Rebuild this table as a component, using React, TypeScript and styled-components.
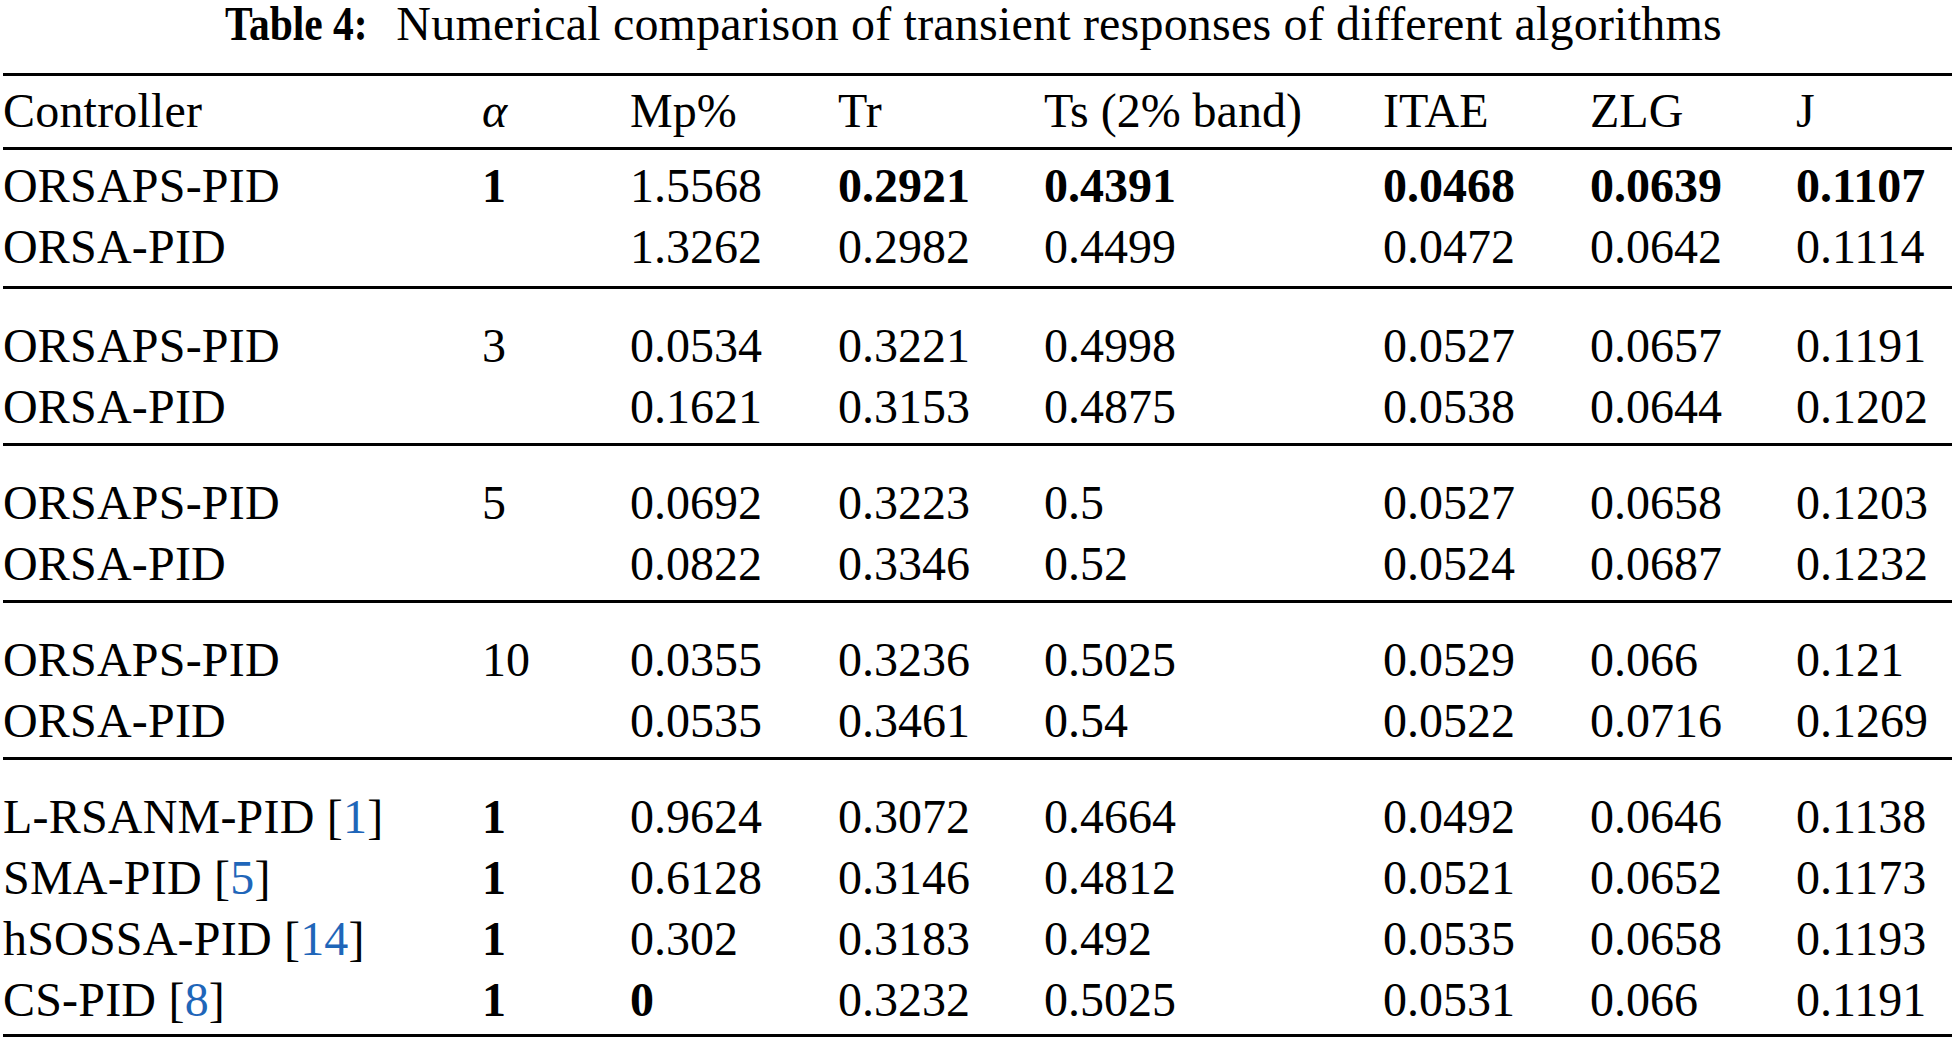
import React from "react";
import styled, { createGlobalStyle } from "styled-components";

const GlobalStyle = createGlobalStyle`
  html, body {
    margin: 0;
    padding: 0;
    background: #fff;
  }
  body {
    font-family: "Liberation Serif", "Times New Roman", serif;
    color: #000;
  }
`;

const Page = styled.div`
  width: 1954px;
  padding: 0 2px 0 3px;
  box-sizing: border-box;
`;

const Caption = styled.div`
  font-size: 48px;
  line-height: 48px;
  text-align: center;
  white-space: nowrap;
  letter-spacing: 0.2px;
  margin-bottom: 25px;
  padding-right: 8px;
`;

const CaptionLabel = styled.span`
  display: inline-block;
  font-weight: 700;
  letter-spacing: 0;
  transform: scaleX(0.865);
  transform-origin: left center;
  margin-right: -6px;
`;

const Table = styled.div`
  border-top: 3px solid #000;
  border-bottom: 3px solid #000;
`;

const Group = styled.div<{ $top: number; $bottom: number; $ruled?: boolean }>`
  padding-top: ${({ $top }) => $top}px;
  padding-bottom: ${({ $bottom }) => $bottom}px;
  border-top: ${({ $ruled }) => ($ruled ? "3px solid #000" : "none")};
`;

const Row = styled.div`
  display: grid;
  grid-template-columns: 479px 148px 208px 206px 339px 207px 206px 1fr;
  font-size: 48px;
  line-height: 61px;
  height: 61px;
  white-space: nowrap;
`;

const Cell = styled.div<{ $bold?: boolean }>`
  font-weight: ${({ $bold }) => ($bold ? 700 : 400)};
`;

const NameCell = styled.div`
  letter-spacing: 0.2px;
`;

const Alpha = styled.span`
  font-style: italic;
`;

const Cite = styled.span`
  color: #1f66b9;
`;

type Val = { v: string; b?: boolean };
type Line = { name: string; cite?: string; cells: Val[] };

const n = (v: string): Val => ({ v });
const b = (v: string): Val => ({ v, b: true });

const groups: Line[][] = [
  [
    {
      name: "ORSAPS-PID",
      cells: [b("1"), n("1.5568"), b("0.2921"), b("0.4391"), b("0.0468"), b("0.0639"), b("0.1107")],
    },
    {
      name: "ORSA-PID",
      cells: [n(""), n("1.3262"), n("0.2982"), n("0.4499"), n("0.0472"), n("0.0642"), n("0.1114")],
    },
  ],
  [
    {
      name: "ORSAPS-PID",
      cells: [n("3"), n("0.0534"), n("0.3221"), n("0.4998"), n("0.0527"), n("0.0657"), n("0.1191")],
    },
    {
      name: "ORSA-PID",
      cells: [n(""), n("0.1621"), n("0.3153"), n("0.4875"), n("0.0538"), n("0.0644"), n("0.1202")],
    },
  ],
  [
    {
      name: "ORSAPS-PID",
      cells: [n("5"), n("0.0692"), n("0.3223"), n("0.5"), n("0.0527"), n("0.0658"), n("0.1203")],
    },
    {
      name: "ORSA-PID",
      cells: [n(""), n("0.0822"), n("0.3346"), n("0.52"), n("0.0524"), n("0.0687"), n("0.1232")],
    },
  ],
  [
    {
      name: "ORSAPS-PID",
      cells: [n("10"), n("0.0355"), n("0.3236"), n("0.5025"), n("0.0529"), n("0.066"), n("0.121")],
    },
    {
      name: "ORSA-PID",
      cells: [n(""), n("0.0535"), n("0.3461"), n("0.54"), n("0.0522"), n("0.0716"), n("0.1269")],
    },
  ],
  [
    {
      name: "L-RSANM-PID",
      cite: "1",
      cells: [b("1"), n("0.9624"), n("0.3072"), n("0.4664"), n("0.0492"), n("0.0646"), n("0.1138")],
    },
    {
      name: "SMA-PID",
      cite: "5",
      cells: [b("1"), n("0.6128"), n("0.3146"), n("0.4812"), n("0.0521"), n("0.0652"), n("0.1173")],
    },
    {
      name: "hSOSSA-PID",
      cite: "14",
      cells: [b("1"), n("0.302"), n("0.3183"), n("0.492"), n("0.0535"), n("0.0658"), n("0.1193")],
    },
    {
      name: "CS-PID",
      cite: "8",
      cells: [b("1"), b("0"), n("0.3232"), n("0.5025"), n("0.0531"), n("0.066"), n("0.1191")],
    },
  ],
];

// spacing after each rule / before the next one
const pads = [
  { top: 5, bottom: 9 },
  { top: 26, bottom: 6 },
  { top: 26, bottom: 6 },
  { top: 26, bottom: 6 },
  { top: 26, bottom: 4 },
];

const headers = ["Mp%", "Tr", "Ts (2% band)", "ITAE", "ZLG", "J"];

export default function App() {
  return (
    <Page>
      <GlobalStyle />
      <Caption>
        <CaptionLabel>Table 4:</CaptionLabel> Numerical comparison of transient responses of different
        algorithms
      </Caption>
      <Table>
        <Group $top={4} $bottom={6}>
          <Row>
            <NameCell>Controller</NameCell>
            <Cell>
              <Alpha>α</Alpha>
            </Cell>
            {headers.map((h) => (
              <Cell key={h}>{h}</Cell>
            ))}
          </Row>
        </Group>
        {groups.map((g, gi) => (
          <Group key={gi} $ruled $top={pads[gi].top} $bottom={pads[gi].bottom}>
            {g.map((line, li) => (
              <Row key={li}>
                <NameCell>
                  {line.name}
                  {line.cite && (
                    <>
                      {" ["}
                      <Cite>{line.cite}</Cite>]
                    </>
                  )}
                </NameCell>
                {line.cells.map((c, ci) => (
                  <Cell key={ci} $bold={c.b}>
                    {c.v}
                  </Cell>
                ))}
              </Row>
            ))}
          </Group>
        ))}
      </Table>
    </Page>
  );
}
